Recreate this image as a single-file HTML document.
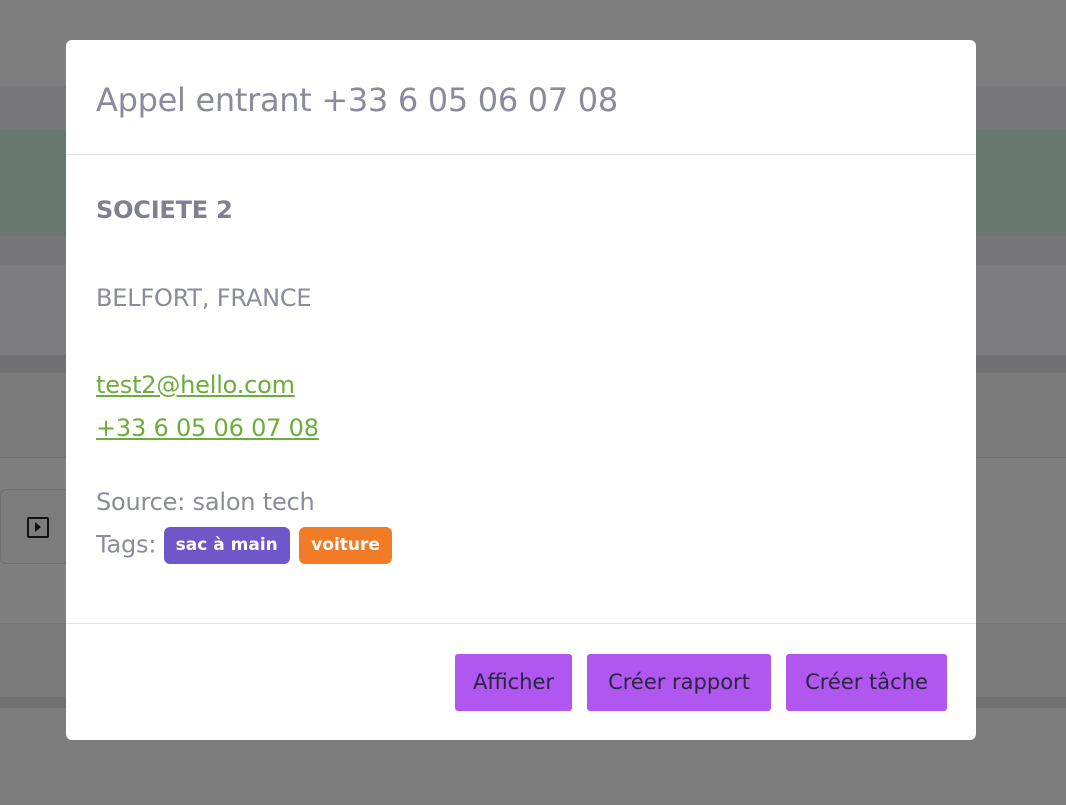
<!DOCTYPE html>
<html><head><meta charset="utf-8"><style>
*{margin:0;padding:0;box-sizing:border-box}
body{width:1066px;height:805px;position:relative;overflow:hidden;background:#7f7f7f;font-family:"DejaVu Sans",sans-serif}
.b{position:absolute;left:0;width:1066px}
.m{position:absolute;left:66px;top:40px;width:910px;height:700px;background:#fff;border-radius:6px;color:#8a8b9b}
.h{height:115px;border-bottom:1px solid #e3e5ec;padding:41px 0 0 30px;font-size:32px;letter-spacing:-0.3px}
.c{padding:0 30px;position:relative;height:469px;border-bottom:1px solid #e3e5ec}
.t{position:absolute;left:30px;font-size:24px;white-space:nowrap;letter-spacing:-0.2px}
a{color:#6cae3b;text-decoration:underline}
.tag{display:inline-block;color:#fff;font-weight:bold;font-size:17px;border-radius:6px;padding:0 12px;height:37px;line-height:37px;vertical-align:middle;letter-spacing:0}
.btn{position:absolute;top:614px;height:57px;background:#b057f0;border-radius:3px;color:#2a2540;font-size:21px;text-align:center;line-height:57px}
</style></head><body>
<div class="b" style="top:86px;height:44px;background:#78787a"></div>
<div class="b" style="top:130px;height:106px;background:#677870"></div>
<div class="b" style="top:236px;height:29px;background:#77777a"></div>
<div class="b" style="top:265px;height:90px;background:#7d7d80"></div>
<div class="b" style="top:355px;height:18px;background:#717173"></div>
<div class="b" style="top:373px;height:84px;background:#7a7a7a"></div>
<div class="b" style="top:457px;height:1px;background:#707070"></div>
<div class="b" style="top:623px;height:1px;background:#707070"></div>
<div class="b" style="top:624px;height:73px;background:#7a7a7a"></div>
<div class="b" style="top:697px;height:11px;background:#717173"></div>
<div class="b" style="top:708px;height:97px;background:#7d7d7d"></div>
<div style="position:absolute;left:0;top:489px;width:80px;height:75px;border:1px solid #6f6f6f;border-radius:6px;background:#7c7c7c"></div>
<div style="position:absolute;left:27px;top:517px;width:22px;height:21px;border:2px solid #111;border-radius:2px"><div style="position:absolute;left:6px;top:3px;border-left:6px solid #111;border-top:5px solid transparent;border-bottom:5px solid transparent"></div></div>
<div class="m">
<div class="h">Appel entrant +33 6 05 06 07 08</div>
<div class="c">
<div class="t" style="top:41px;font-weight:bold;color:#7f8090">SOCIETE 2</div>
<div class="t" style="top:129px">BELFORT, FRANCE</div>
<div class="t" style="top:216px"><a>test2@hello.com</a></div>
<div class="t" style="top:259px"><a>+33 6 05 06 07 08</a></div>
<div class="t" style="top:333px">Source: salon tech</div>
<div class="t" style="top:372px">Tags: <span class="tag" style="background:#6e58c9">sac à main</span> <span class="tag" style="background:#f27b25;margin-left:2px">voiture</span></div>
</div>
<div class="btn" style="left:389px;width:117px">Afficher</div>
<div class="btn" style="left:521px;width:184px">Créer rapport</div>
<div class="btn" style="left:720px;width:161px">Créer tâche</div>
</div>
</body></html>
